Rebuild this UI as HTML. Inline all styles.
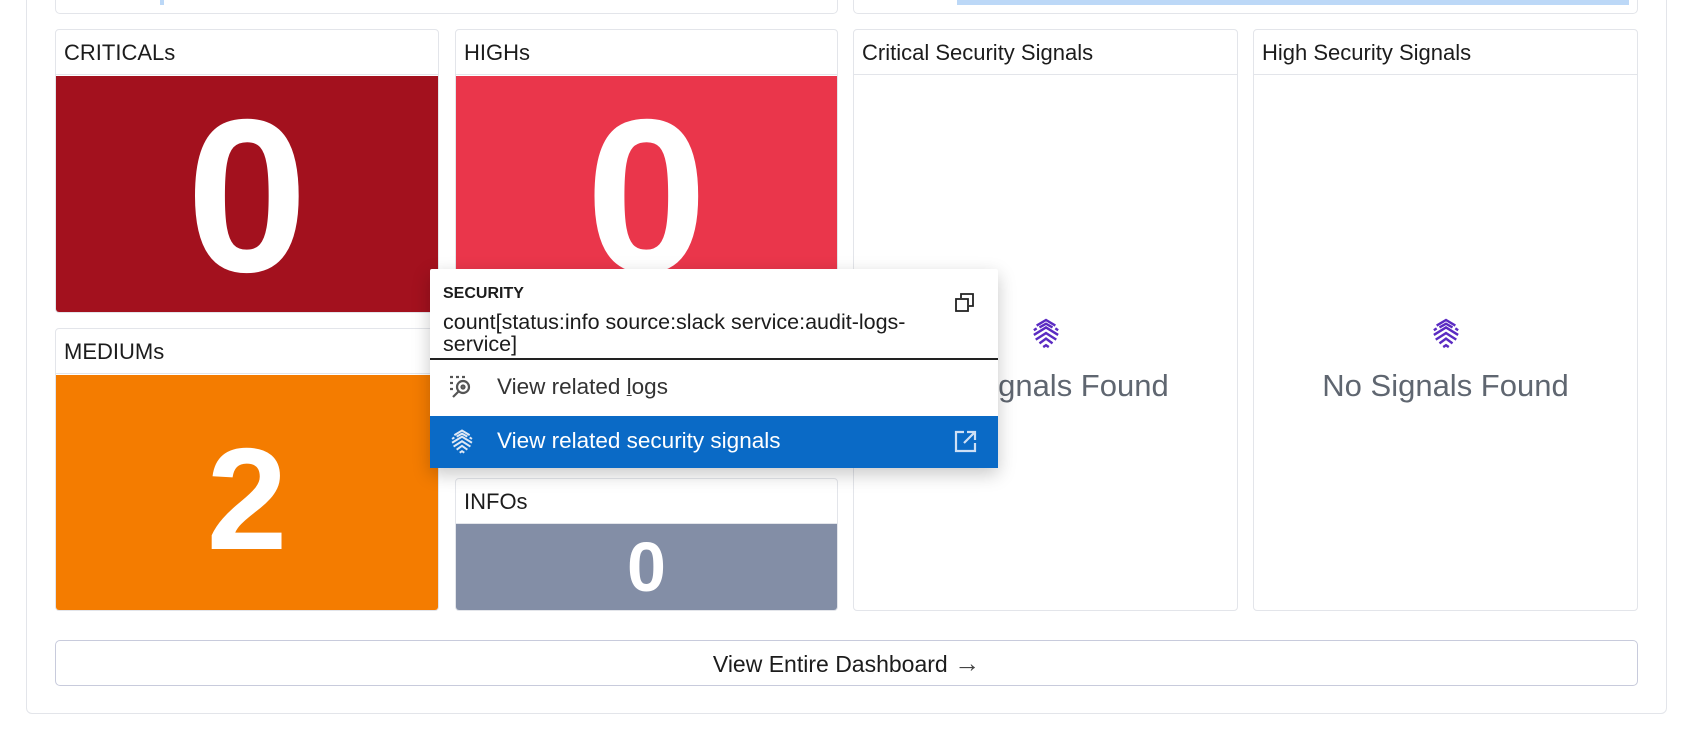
<!DOCTYPE html>
<html><head><meta charset="utf-8"><style>
*{box-sizing:border-box;margin:0;padding:0}
body{width:1694px;height:742px;background:#fff;position:relative;overflow:hidden;font-family:"Liberation Sans",sans-serif;color:#1c1c1c}
.abs{position:absolute}
.panel{position:absolute;border:1px solid #e3e5ea;border-radius:4px;background:#fff;overflow:hidden}
.hd{height:45px;line-height:45px;padding-left:8px;font-size:22px;border-bottom:1px solid #e3e5ea}
.blk{position:absolute;left:0;right:0;bottom:0;color:#fff;font-weight:bold;text-align:center;display:flex;align-items:center;justify-content:center}
.ns{position:absolute;left:0;right:0;text-align:center;color:#5f6670;font-size:31px}
</style></head><body>
<div class="abs" style="left:26px;top:-10px;width:1641px;height:724px;border:1px solid #e3e5ea;border-radius:6px"></div>
<div class="abs" style="left:55px;top:-10px;width:783px;height:24px;border:1px solid #e3e5ea;border-radius:5px"></div>
<div class="abs" style="left:160px;top:0;width:4px;height:5px;background:#bcd8f7"></div>
<div class="abs" style="left:853px;top:-10px;width:785px;height:24px;border:1px solid #e3e5ea;border-radius:5px"></div>
<div class="abs" style="left:957px;top:0;width:672px;height:5px;background:#bcd8f7"></div>

<div class="panel" style="left:55px;top:29px;width:384px;height:284px"><div class="hd">CRITICALs</div><div class="blk" style="top:46px;background:#a3111e;font-size:218px;padding-top:6px">0</div></div>
<div class="panel" style="left:455px;top:29px;width:383px;height:284px"><div class="hd">HIGHs</div><div class="blk" style="top:46px;background:#ea364b;font-size:218px;padding-top:6px">0</div></div>
<div class="panel" style="left:55px;top:328px;width:384px;height:283px"><div class="hd">MEDIUMs</div><div class="blk" style="top:46px;background:#f47c00;font-size:145px;padding-top:14px">2</div></div>
<div class="panel" style="left:455px;top:328px;width:383px;height:140px"><div class="hd">LOWs</div></div>
<div class="panel" style="left:455px;top:478px;width:383px;height:133px"><div class="hd">INFOs</div><div class="blk" style="top:45px;background:#838ea6;font-size:70px">0</div></div>

<svg width="0" height="0" style="position:absolute"><defs><g id="sig" fill="none" stroke="#5b2bc2" stroke-width="2.6"><path d="M5 8 L15 2 L25 8 M2 13 L5 11 M8 10 L15 6 L22 10 M25 11 L28 13 M2 18 L15 10 L28 18 M4 23 L15 16 L26 23 M8 27 L15 22 L22 27 M12 31 L15 29 L18 31"/></g></defs></svg>
<div class="panel" style="left:853px;top:29px;width:385px;height:582px"><div class="hd">Critical Security Signals</div>
<svg class="abs" style="left:178px;top:288px" width="28" height="32" viewBox="0 0 30 34"><use href="#sig"/></svg>
<div class="ns" style="top:338px">No Signals Found</div></div>
<div class="panel" style="left:1253px;top:29px;width:385px;height:582px"><div class="hd">High Security Signals</div>
<svg class="abs" style="left:178px;top:288px" width="28" height="32" viewBox="0 0 30 34"><use href="#sig"/></svg>
<div class="ns" style="top:338px">No Signals Found</div></div>

<div class="abs" style="left:55px;top:640px;width:1583px;height:46px;border:1px solid #c8cbdc;border-radius:5px;text-align:center;line-height:44px;font-size:23px">View Entire Dashboard <span style="font-size:26px;color:#444">&#8594;</span></div>

<div class="abs" style="left:430px;top:269px;width:568px;height:199px;background:#fff;box-shadow:0 6px 18px rgba(0,0,0,.22);border-radius:2px">
<div class="abs" style="left:13px;top:16px;font-size:16px;font-weight:bold">SECURITY</div>
<svg class="abs" style="left:525px;top:24px" width="20" height="20" viewBox="0 0 20 20" fill="none" stroke="#222" stroke-width="1.8"><rect x="1" y="6" width="12" height="12"/><path d="M6 5 V1 H18 V13 H14"/></svg>
<div class="abs" style="left:13px;top:42px;font-size:21.5px;line-height:22px;width:520px">count[status:info source:slack service:audit-logs-<br>service]</div>
<div class="abs" style="left:0;right:0;top:89px;height:2px;background:#222"></div>
<svg class="abs" style="left:18px;top:105px" width="26" height="26" viewBox="0 0 26 26" fill="none" stroke="#555" stroke-width="2.2"><path d="M2 3h3M8 3h3M14 3h3M2 9h3M2 15h3"/><circle cx="15" cy="13" r="6"/><circle cx="15" cy="13" r="1.5"/><path d="M10.5 17.5 L5 23"/></svg>
<div class="abs" style="left:67px;top:105px;font-size:22.5px;color:#333">View related <u style="text-decoration-thickness:1px">l</u>ogs</div>
<div class="abs" style="left:0;right:0;top:147px;height:52px;background:#0a6ac6">
<svg class="abs" style="left:20px;top:13px" width="24" height="26" viewBox="0 0 30 34"><g fill="none" stroke="#dfe8f5" stroke-width="2.6"><path d="M5 8 L15 2 L25 8 M2 13 L5 11 M8 10 L15 6 L22 10 M25 11 L28 13 M2 18 L15 10 L28 18 M4 23 L15 16 L26 23 M8 27 L15 22 L22 27 M12 31 L15 29 L18 31"/></g></svg>
<div class="abs" style="left:67px;top:12px;font-size:22.5px;color:#fff">View related security signals</div>
<svg class="abs" style="left:524px;top:14px" width="23" height="23" viewBox="0 0 23 23" fill="none" stroke="#cfe0f5" stroke-width="2.2"><path d="M10 2H2V21H21V13M13 2H21V10M21 2L10 13"/></svg>
</div></div>
</body></html>
